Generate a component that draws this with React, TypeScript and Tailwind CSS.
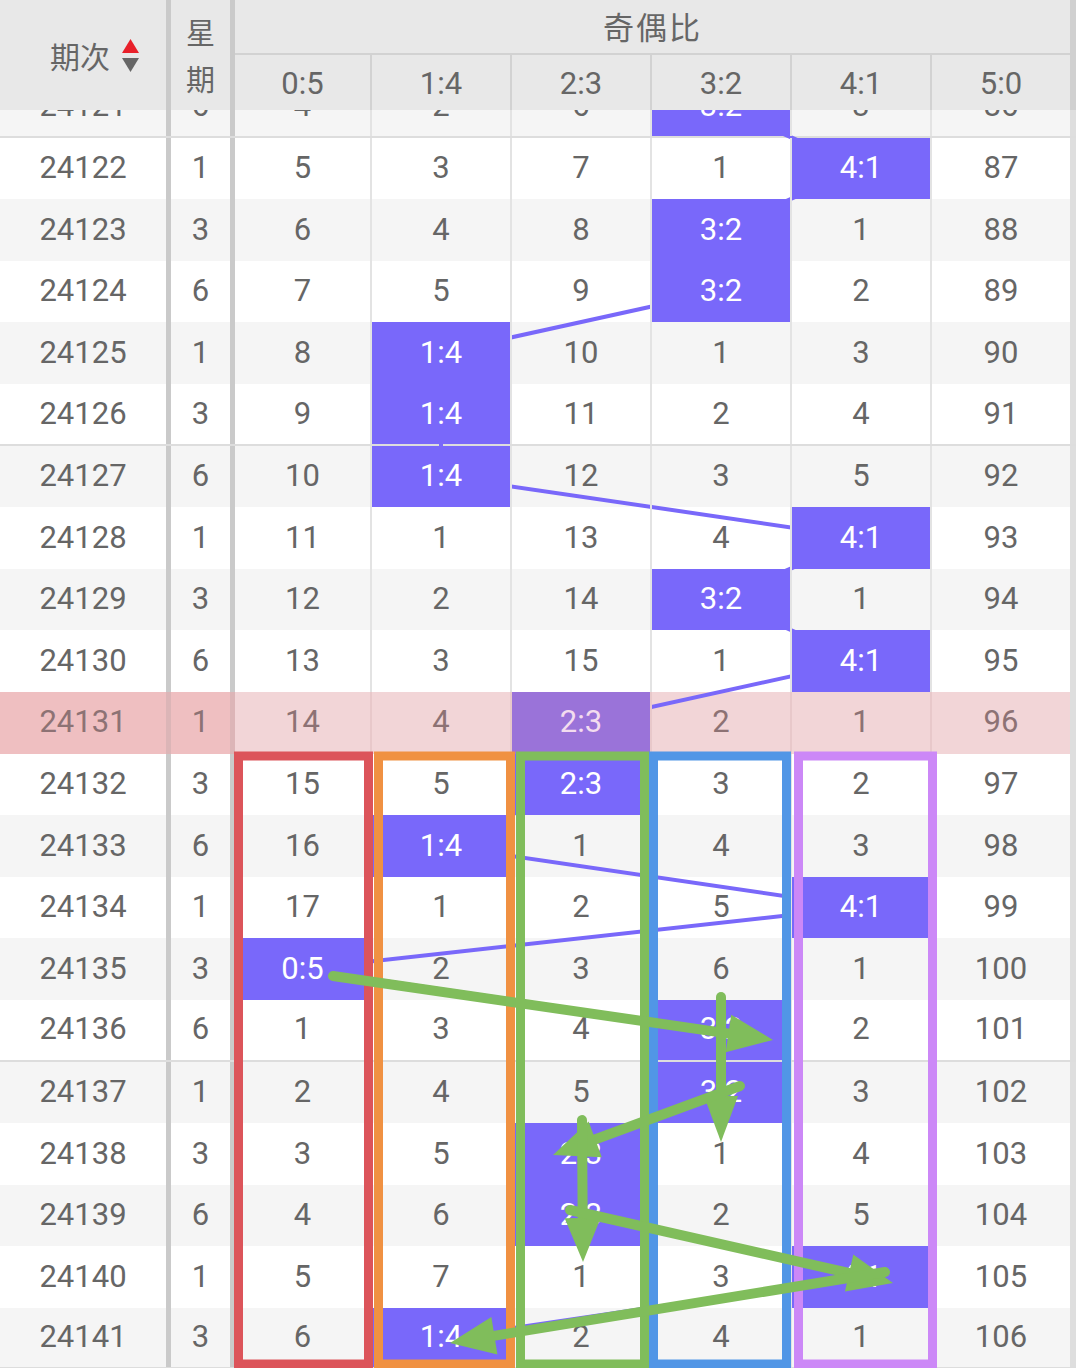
import React from 'react';

const LABELS = ['0:5', '1:4', '2:3', '3:2', '4:1'];
type R = [number, number, (number | null)[], number];
const DATA: R[] = [
  [24121, 6, [4, 2, 6, null, 3], 86],
  [24122, 1, [5, 3, 7, 1, null], 87],
  [24123, 3, [6, 4, 8, null, 1], 88],
  [24124, 6, [7, 5, 9, null, 2], 89],
  [24125, 1, [8, null, 10, 1, 3], 90],
  [24126, 3, [9, null, 11, 2, 4], 91],
  [24127, 6, [10, null, 12, 3, 5], 92],
  [24128, 1, [11, 1, 13, 4, null], 93],
  [24129, 3, [12, 2, 14, null, 1], 94],
  [24130, 6, [13, 3, 15, 1, null], 95],
  [24131, 1, [14, 4, null, 2, 1], 96],
  [24132, 3, [15, 5, null, 3, 2], 97],
  [24133, 6, [16, null, 1, 4, 3], 98],
  [24134, 1, [17, 1, 2, 5, null], 99],
  [24135, 3, [null, 2, 3, 6, 1], 100],
  [24136, 6, [1, 3, 4, null, 2], 101],
  [24137, 1, [2, 4, 5, null, 3], 102],
  [24138, 3, [3, 5, null, 1, 4], 103],
  [24139, 6, [4, 6, null, 2, 5], 104],
  [24140, 1, [5, 7, 1, 3, null], 105],
  [24141, 3, [6, null, 2, 4, 1], 106],
];

const COLW = ['w-[137px]', 'w-[140px]', 'w-[140px]', 'w-[140px]', 'w-[140px]'];
const CX = [302.5, 441, 581, 721, 861];
const ROW_TOP = 76;
const RH = 61.6;
const cy = (i: number) => ROW_TOP + RH * i + 30.5;

const PURPLE = '#7968fa';
const GREEN = '#80bd5b';

function SortIcon() {
  return (
    <svg width="17" height="34" viewBox="0 0 17 34" className="ml-[12px] mt-[2px]">
      <polygon points="8.5,0 17,14 0,14" fill="#e8202a" />
      <polygon points="0,19 17,19 8.5,33" fill="#666666" />
    </svg>
  );
}

function Arrow({ x1, y1, x2, y2, len = 45, half = 19 }: { x1: number; y1: number; x2: number; y2: number; len?: number; half?: number }) {
  const dx = x2 - x1;
  const dy = y2 - y1;
  const L = Math.hypot(dx, dy);
  const ux = dx / L;
  const uy = dy / L;
  const bx = x2 - ux * len;
  const by = y2 - uy * len;
  const px = -uy * half;
  const py = ux * half;
  return (
    <g>
      <line x1={x1} y1={y1} x2={bx + ux * 4} y2={by + uy * 4} stroke={GREEN} strokeWidth={10} strokeLinecap="round" />
      <polygon points={`${x2},${y2} ${bx + px},${by + py} ${bx - px},${by - py}`} fill={GREEN} />
    </g>
  );
}

export default function App() {
  const hits = DATA.map((r) => r[2].indexOf(null));
  const segs: { x1: number; y1: number; x2: number; y2: number }[] = [];
  for (let i = 0; i < hits.length - 1; i++) {
    segs.push({ x1: CX[hits[i]], y1: cy(i), x2: CX[hits[i + 1]], y2: cy(i + 1) });
  }

  return (
    <div className="relative w-[1076px] h-[1368px] overflow-hidden bg-white font-['Roboto','Noto_Sans_CJK_SC',sans-serif] text-[31px] text-[#666666]">
      {/* Header */}
      <div className="relative z-30 flex h-[110px] bg-[#e8e8e8]">
        <div className="flex w-[171px] items-center pl-[50px] border-r-[5px] border-[#cacaca]">
          <span className="font-['Noto_Sans_CJK_SC',sans-serif] text-[30px]">期次</span>
          <SortIcon />
        </div>
        <div className="flex w-[64px] flex-col items-center justify-center border-r-[5px] border-[#cacaca] font-['Noto_Sans_CJK_SC',sans-serif] text-[29px] leading-[47px]">
          <span>星</span>
          <span>期</span>
        </div>
        <div className="flex w-[835px] flex-col">
          <div className="flex h-[55px] items-center justify-center border-b-2 border-[#d2d2d2] font-['Noto_Sans_CJK_SC',sans-serif] text-[31px] tracking-[2px]">
            奇偶比
          </div>
          <div className="flex flex-1">
            {LABELS.map((l, k) => (
              <div key={l} className={`${COLW[k]} flex items-center justify-center pt-[4px] border-r-2 border-[#d2d2d2]`}>
                {l}
              </div>
            ))}
            <div className="flex w-[138px] items-center justify-center pt-[4px]">5:0</div>
          </div>
        </div>
        <div className="w-[6px] bg-[#d0d0d0]" />
      </div>

      {/* Body */}
      <div className="-mt-[34px]">
        {DATA.map((r, i) => {
          const [id, wd, vals, tot] = r;
          const pink = i === 10;
          const sep = i % 5 === 0 && !pink;
          const rowBg = pink ? 'bg-[#f2d5d7]' : i % 2 === 0 ? 'bg-[#f5f5f5]' : 'bg-white';
          const txt = pink ? 'text-[#8d7274]' : 'text-[#666666]';
          const thick = pink ? 'border-[#dcb5b7]' : 'border-[#cacaca]';
          const grid = pink ? 'border-[#e8c8ca]' : 'border-[#e3e3e3]';
          const stickyBg = pink ? 'bg-[#efbfc1]' : '';
          return (
            <div
              key={id}
              className={`flex h-[61.6px] ${rowBg} ${txt} ${sep ? 'border-b-2 border-[#dddddd]' : ''}`}
            >
              <div className={`relative z-10 flex w-[171px] items-center justify-center border-r-[5px] ${thick} ${stickyBg}`}>
                {id}
              </div>
              <div className={`relative z-10 flex w-[64px] items-center justify-center border-r-[5px] ${thick} ${stickyBg}`}>
                {wd}
              </div>
              {vals.map((v, k) => {
                const hit = v === null;
                const hitBg = pink ? 'bg-[#9a73d9] text-[#f3dcef]' : 'bg-[#7968fa] text-white';
                return (
                  <div
                    key={k}
                    className={`relative z-10 flex ${COLW[k]} items-center justify-center border-r-2 ${grid} ${hit ? hitBg : ''}`}
                  >
                    {hit ? LABELS[k] : v}
                  </div>
                );
              })}
              <div className="relative z-10 flex w-[138px] items-center justify-center">{tot}</div>
              <div className="w-[6px] bg-[#dedede]" />
            </div>
          );
        })}
      </div>

      {/* purple connection lines */}
      <svg className="pointer-events-none absolute inset-0 z-[5]" width="1076" height="1368">
        {segs.map((s, k) => (
          <line key={k} x1={s.x1} y1={s.y1} x2={s.x2} y2={s.y2} stroke={PURPLE} strokeWidth={4} />
        ))}
      </svg>

      {/* annotations */}
      <svg className="pointer-events-none absolute inset-0 z-40" width="1076" height="1368">
        <rect x={238.5} y={756} width={130} height={608} fill="none" stroke="#dc545a" strokeWidth={9} />
        <rect x={378.5} y={756} width={132} height={608} fill="none" stroke="#f09142" strokeWidth={9} />
        <rect x={520.5} y={756} width={124} height={608} fill="none" stroke={GREEN} strokeWidth={9} />
        <rect x={653.5} y={756} width={133} height={608} fill="none" stroke="#5196e6" strokeWidth={9} />
        <rect x={798.5} y={756} width={134} height={608} fill="none" stroke="#cc88f7" strokeWidth={9} />

        <Arrow x1={333} y1={976} x2={773} y2={1040} />
        <Arrow x1={721} y1={997} x2={721} y2={1142} len={46} half={17} />
        <Arrow x1={740} y1={1086} x2={553} y2={1155} />
        <Arrow x1={582} y1={1120} x2={583} y2={1262} len={44} half={18} />
        <Arrow x1={570} y1={1210} x2={893} y2={1283} />
        <Arrow x1={885} y1={1272} x2={450} y2={1343} />
      </svg>
    </div>
  );
}
